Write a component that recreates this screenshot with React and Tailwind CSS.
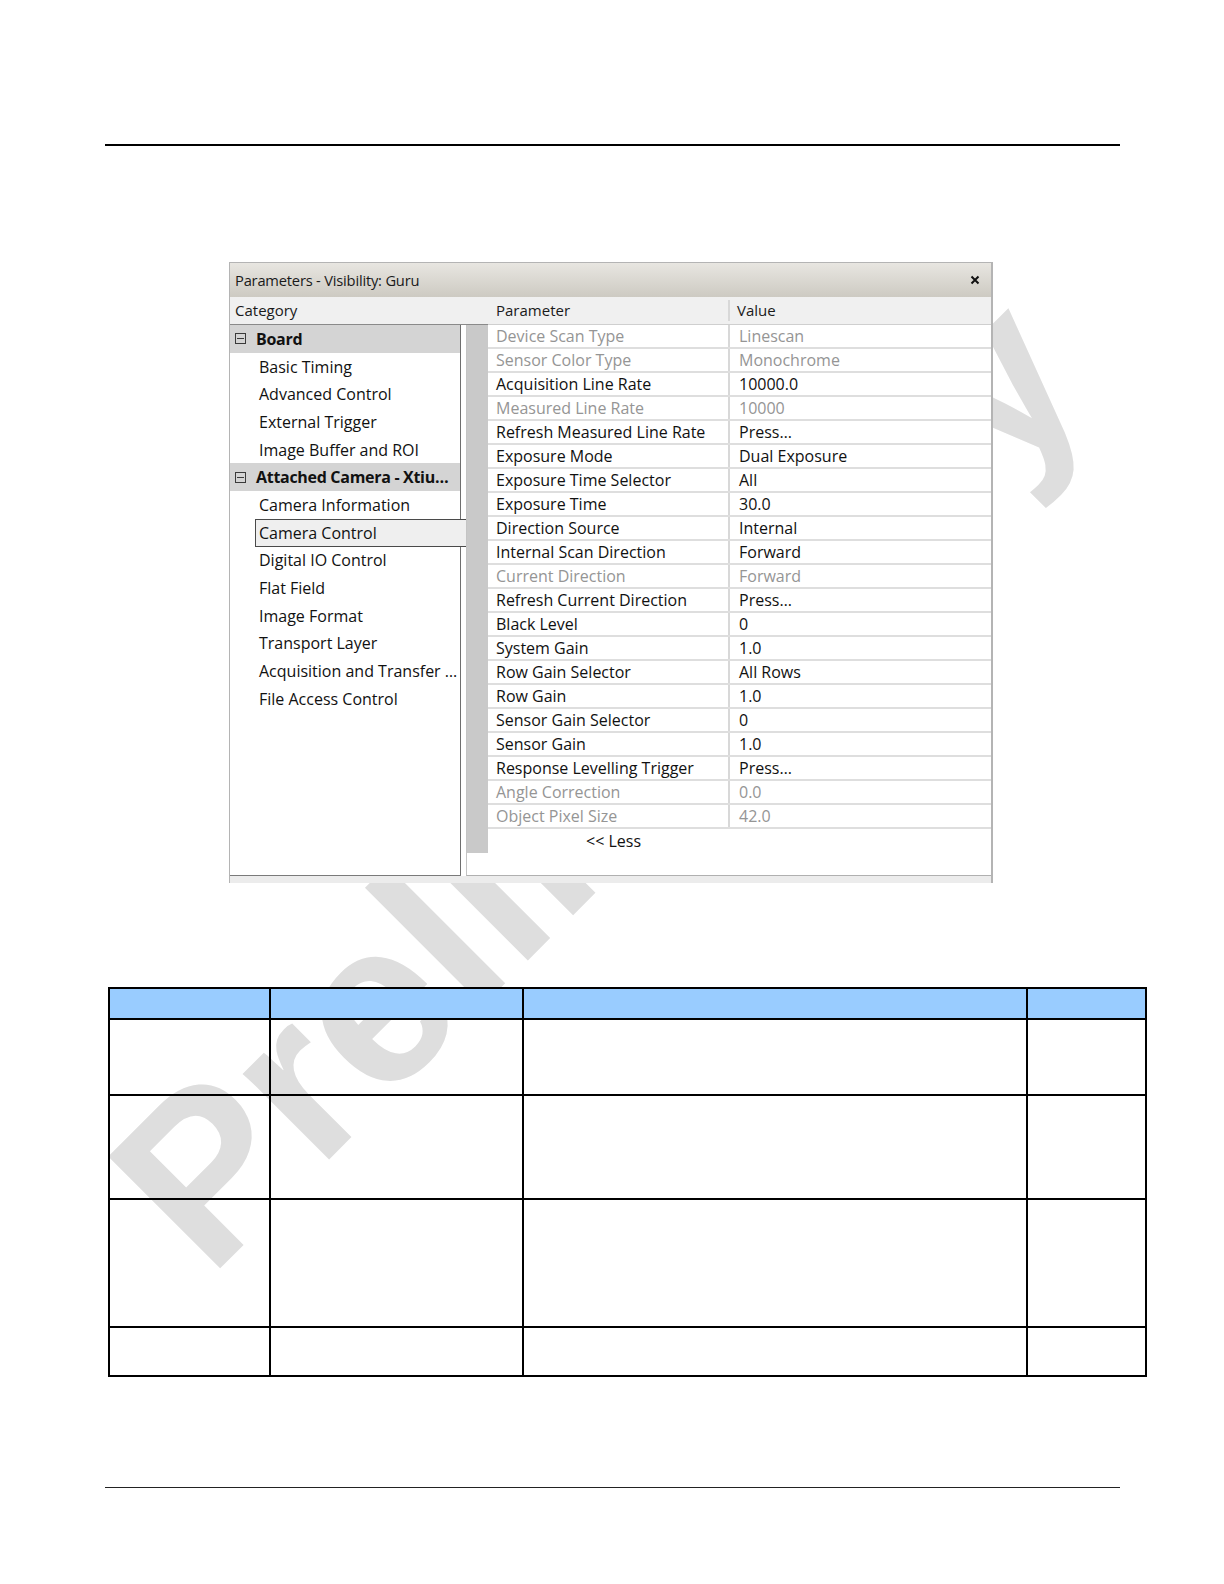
import React from "react";

const TREE = [
  { label: "Board", kind: "group" },
  { label: "Basic Timing" },
  { label: "Advanced Control" },
  { label: "External Trigger" },
  { label: "Image Buffer and ROI" },
  { label: "Attached Camera - Xtiu…", kind: "group" },
  { label: "Camera Information" },
  { label: "Camera Control", kind: "selected" },
  { label: "Digital IO Control" },
  { label: "Flat Field" },
  { label: "Image Format" },
  { label: "Transport Layer" },
  { label: "Acquisition and Transfer …" },
  { label: "File Access Control" },
];

const PARAMS = [
  ["Device Scan Type", "Linescan", true],
  ["Sensor Color Type", "Monochrome", true],
  ["Acquisition Line Rate", "10000.0"],
  ["Measured Line Rate", "10000", true],
  ["Refresh Measured Line Rate", "Press…"],
  ["Exposure Mode", "Dual Exposure"],
  ["Exposure Time Selector", "All"],
  ["Exposure Time", "30.0"],
  ["Direction Source", "Internal"],
  ["Internal Scan Direction", "Forward"],
  ["Current Direction", "Forward", true],
  ["Refresh Current Direction", "Press…"],
  ["Black Level", "0"],
  ["System Gain", "1.0"],
  ["Row Gain Selector", "All Rows"],
  ["Row Gain", "1.0"],
  ["Sensor Gain Selector", "0"],
  ["Sensor Gain", "1.0"],
  ["Response Levelling Trigger", "Press…"],
  ["Angle Correction", "0.0", true],
  ["Object Pixel Size", "42.0", true],
];

function TreeRow({ label, kind }) {
  if (kind === "group") {
    return (
      <div className="h-[27.7px] w-[231px] bg-[#d4d4d4] border-r border-[#6e6e6e] flex items-center pl-[5px]">
        <span className="w-[11px] h-[11px] border border-[#3a3a3a] flex items-center justify-center shrink-0">
          <span className="w-[7px] h-px bg-[#3a3a3a]" />
        </span>
        <span className="ml-[10px] font-bold text-[16px] text-[#111] whitespace-nowrap tracking-[-0.3px]">{label}</span>
      </div>
    );
  }
  if (kind === "selected") {
    return (
      <div className="h-[27.7px] flex">
        <div className="w-[25px] shrink-0" />
        <div className="w-[211px] shrink-0 border border-r-0 border-[#4a4a4a] bg-[#efefef] flex items-center pl-[3px] text-[16px] text-[#111] whitespace-nowrap">
          {label}
        </div>
      </div>
    );
  }
  return (
    <div className="h-[27.7px] w-[231px] border-r border-[#6e6e6e] flex items-center pl-[29px] text-[16px] text-[#111] whitespace-nowrap">
      {label}
    </div>
  );
}

function ParamRow({ name, value, dis }) {
  const c = dis ? "text-[#959595]" : "text-[#111]";
  return (
    <div className="h-[24px] flex border-b-2 border-[#dedede]">
      <div className={`w-[242px] shrink-0 border-r-2 border-[#d8d8d8] pl-[8px] flex items-center text-[16px] whitespace-nowrap ${c}`}>
        {name}
      </div>
      <div className={`flex-1 pl-[9px] flex items-center text-[16px] whitespace-nowrap ${c}`}>{value}</div>
    </div>
  );
}

function Dialog() {
  return (
    <div className="mt-[116px] ml-[229px] w-[764px] border-l border-t border-r-2 border-[#b4b4b4] bg-white font-['Open_Sans','Noto_Sans',sans-serif]">
      {/* Title bar */}
      <div className="h-[34px] bg-gradient-to-b from-[#e8e6e1] to-[#cdcac2] flex items-center justify-between pl-[5px] pr-[11px]">
        <span className="text-[14.7px] text-[#1a1a1a] tracking-[-0.2px]">Parameters - Visibility: Guru</span>
        <svg width="10" height="10" viewBox="0 0 10 10">
          <path d="M1.5 1.5 L8.5 8.5 M8.5 1.5 L1.5 8.5" stroke="#111" strokeWidth="2" />
        </svg>
      </div>
      {/* Header */}
      <div className="h-[28px] bg-[#f0f0f0] flex text-[15px] text-[#1a1a1a]">
        <div className="w-[258px] shrink-0 pl-[5px] flex items-center border-b border-[#8a8a8a]">Category</div>
        <div className="w-[242px] shrink-0 flex border-b border-[#cfcfcf]">
          <div className="flex-1 pl-[8px] flex items-center my-[3px] border-r-2 border-[#d8d8d8]">Parameter</div>
        </div>
        <div className="flex-1 pl-[7px] flex items-center border-b border-[#cfcfcf]">Value</div>
      </div>
      {/* Body */}
      <div className="h-[551px] flex">
        <div className="w-[231px] shrink-0 flex flex-col border-b border-[#7a7a7a]">
          {TREE.map((t) => (
            <TreeRow key={t.label} {...t} />
          ))}
          <div className="flex-1 w-[231px] border-r border-[#6e6e6e]" />
        </div>
        <div className="flex-1 ml-[5px] border-l border-[#c4c4c4] border-b border-b-[#b0b0b0] flex flex-col">
          <div className="flex">
            <div className="w-[21px] h-[528px] bg-[#c9c9c9] shrink-0" />
            <div className="flex-1 flex flex-col">
              {PARAMS.map(([n, v, d]) => (
                <ParamRow key={n} name={n} value={v} dis={d} />
              ))}
              <div className="h-[24px] flex items-center pl-[98px] text-[16px] text-[#111]">&lt;&lt; Less</div>
            </div>
          </div>
        </div>
      </div>
      <div className="h-[7px] bg-[#ececec]" />
    </div>
  );
}

function DocTable() {
  const cell = "border-r-2 border-b-2 border-black";
  const head = `${cell} bg-[#99ccff]`;
  return (
    <div className="mt-[104px] ml-[108px] w-[1039px] border-t-2 border-l-2 border-black grid grid-cols-[161px_253px_504px_119px] grid-rows-[31px_76px_104px_128px_49px]">
      <div className={head} />
      <div className={head} />
      <div className={head} />
      <div className={head} />
      {Array.from({ length: 16 }).map((_, i) => (
        <div key={i} className={cell} />
      ))}
    </div>
  );
}

export default function App() {
  return (
    <div className="relative w-[1224px] h-[1584px] bg-white overflow-hidden">
      <div className="absolute left-[72px] top-[1142px] origin-top-left -rotate-45 whitespace-nowrap font-['Liberation_Sans',Arial,sans-serif] font-bold text-[230px] leading-none text-[#dedede] select-none">
        Preliminary
      </div>
      <div className="relative flex flex-col">
        <div className="mt-[144px] ml-[105px] w-[1015px] h-[2px] bg-black" />
        <Dialog />
        <DocTable />
        <div className="mt-[110px] ml-[105px] w-[1015px] h-px bg-[#222]" />
      </div>
    </div>
  );
}
